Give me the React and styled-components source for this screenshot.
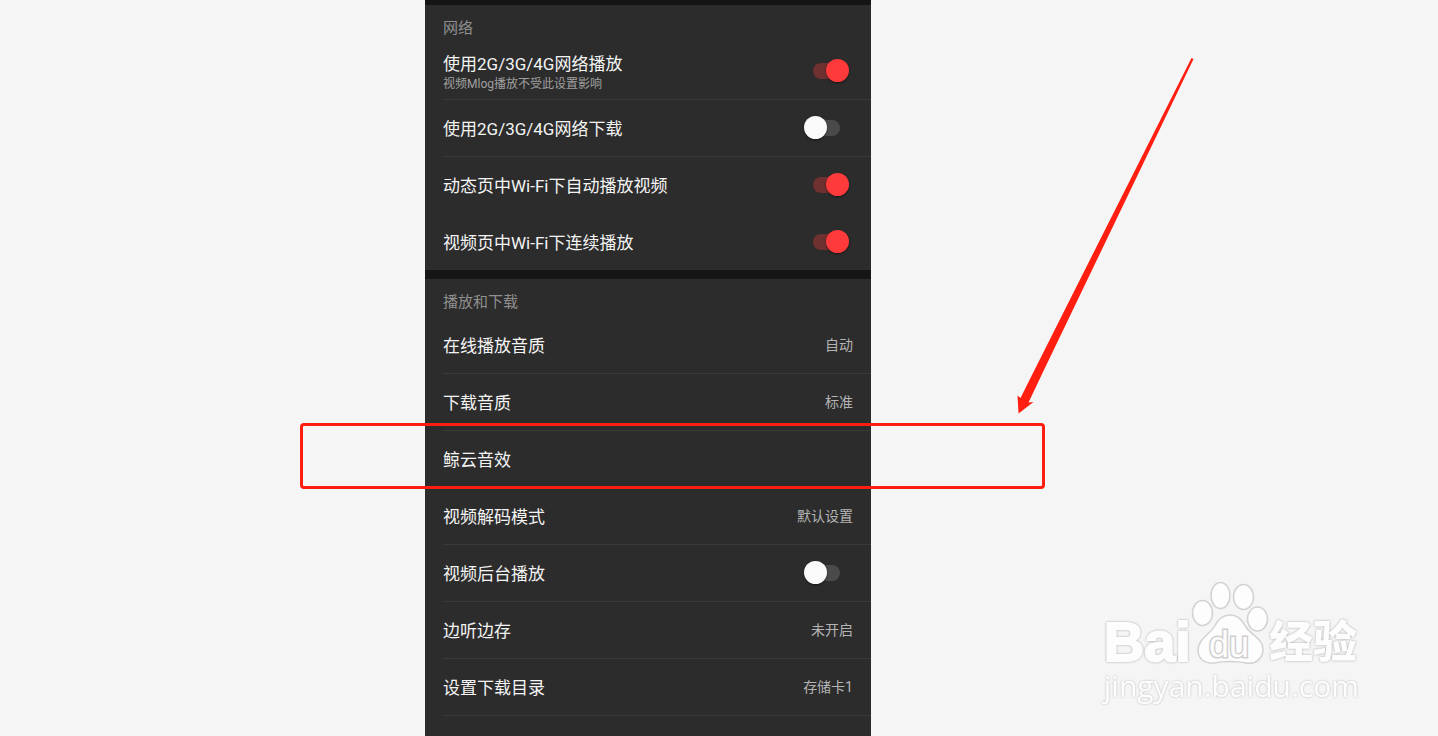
import React, { useState } from 'react'
import styled, { createGlobalStyle } from 'styled-components';

const sections = [
  {
    title: '网络',
    rows: [
      { id: 'mobile-play', label: '使用2G/3G/4G网络播放', hint: '视频Mlog播放不受此设置影响', on: true },
      { id: 'mobile-download', label: '使用2G/3G/4G网络下载', on: false },
      { id: 'wifi-autoplay', label: '动态页中Wi-Fi下自动播放视频', on: true },
      { id: 'wifi-continuous', label: '视频页中Wi-Fi下连续播放', on: true, plain: true },
    ],
  },
  {
    title: '播放和下载',
    rows: [
      { id: 'online-quality', label: '在线播放音质', value: '自动' },
      { id: 'download-quality', label: '下载音质', value: '标准' },
      { id: 'sound-effect', label: '鲸云音效', value: '', marked: true },
      { id: 'decode-mode', label: '视频解码模式', value: '默认设置' },
      { id: 'background-play', label: '视频后台播放', on: false },
      { id: 'cache', label: '边听边存', value: '未开启' },
      { id: 'download-folder', label: '设置下载目录', value: '存储卡1' },
    ],
  },
];

const SwitchRow = ({ row }) => {
  const [on, setOn] = useState(row.on);

  return (
    <Row as="label" htmlFor={row.id} $plain={row.plain}>
      <Texts>
        <Label>{row.label}</Label>
        {row.hint && <Hint>{row.hint}</Hint>}
      </Texts>
      <Switch id={row.id} type="checkbox" role="switch" checked={on} onChange={e => setOn(e.target.checked)} />
    </Row>
  )
}

const LinkRow = ({ row }) => (
  <Row as="button" type="button">
    <Texts>
      <Label>{row.label}</Label>
    </Texts>
    <Value>{row.value}</Value>
    {
      row.marked &&
      <Marker>
        <Arrow viewBox="0 0 180 360" aria-hidden="true">
          <path d="M175.5 2 L17.5 316 L4.5 342 L1.5 339.5 L2.5 357.5 L17.5 346 L12.5 346.5 L27 316 L177.5 3 Z" />
        </Arrow>
      </Marker>
    }
  </Row>
)

const Watermark = () => (
  <Brand>
    <BrandTop>
      <BrandWord>Bai</BrandWord>
      <Paw>
        <svg viewBox="0 0 80 88" aria-hidden="true">
          <ellipse cx="13.5" cy="33" rx="10" ry="12.5" />
          <ellipse cx="31.5" cy="15.5" rx="9.5" ry="13" />
          <ellipse cx="54.5" cy="17" rx="10" ry="12.5" />
          <ellipse cx="68.5" cy="39" rx="10" ry="12" />
          <path d="M41 35 C33 35 28 41 25 47 C21 54 9 59 9 70 C9 79 16 84 25 83 C34 81 48 81 57 83 C67 85 74 78 74 69 C74 59 62 55 57 47 C53 40 49 35 41 35 Z" />
        </svg>
        <PawText>du</PawText>
      </Paw>
      <BrandName>经验</BrandName>
    </BrandTop>
    <BrandUrl>jingyan.baidu.com</BrandUrl>
  </Brand>
)

const App = () => (
  <>
    <GlobalStyle />
    <Page>
      <Panel>
        {sections.map(section => (
          <Section key={section.title}>
            <Title>{section.title}</Title>
            {section.rows.map(row => (
              row.on === undefined
                ? <LinkRow key={row.id} row={row} />
                : <SwitchRow key={row.id} row={row} />
            ))}
          </Section>
        ))}
        <PanelEnd />
      </Panel>
      <Watermark />
    </Page>
  </>
)

export default App;

const GlobalStyle = createGlobalStyle`
  * {
    box-sizing: border-box;
  }
  body {
    margin: 0;
    background: #f5f5f5;
    font-family: Roboto, 'Noto Sans CJK SC', sans-serif;
  }
`;

const Page = styled.div`
  position: relative;
  display: grid;
  grid-template-columns: 425fr minmax(0, 446px) 567fr;
  height: 100vh;
  overflow: hidden;
`;

const Panel = styled.main`
  grid-column: 2;
  display: flex;
  flex-direction: column;
  background: #2c2c2c;
`;

const Section = styled.section`
  border-top: 9px solid #151515;

  &:first-child {
    border-top-width: 5px;
  }
`;

const Title = styled.h2`
  margin: 0;
  height: 37px;
  padding: 12px 18px 0;
  font-size: 15px;
  font-weight: 400;
  line-height: 22px;
  color: #8f8f8f;
`;

const Row = styled.div`
  position: relative;
  display: flex;
  align-items: center;
  justify-content: space-between;
  width: calc(100% - 18px);
  height: 57px;
  margin: 0 0 0 18px;
  padding: 0 18px 0 0;
  border: 0;
  border-top: 1px solid ${props => props.$plain ? 'transparent' : '#3a3a3a'};
  background: none;
  font-family: inherit;
  text-align: left;

  h2 + & {
    border-top-color: transparent;
  }
`;

const Texts = styled.span`
  display: flex;
  flex-direction: column;
  padding-top: 2px;
`;

const Label = styled.span`
  font-size: 17px;
  line-height: 24px;
  color: #f4f4f4;
`;

const Hint = styled.span`
  font-size: 12px;
  line-height: 16px;
  color: #a0a0a0;
`;

const Value = styled.span`
  font-size: 14px;
  line-height: 20px;
  color: #b4b4b4;
`;

const Switch = styled.input`
  appearance: none;
  position: relative;
  flex: none;
  width: 27px;
  height: 16px;
  margin: 0 13px 0 0;
  border-radius: 8px;
  background: ${props => props.checked ? '#6f3030' : '#4a4a4a'};

  &::before {
    content: '';
    position: absolute;
    top: -4px;
    left: ${props => props.checked ? '13px' : '-9px'};
    width: 23px;
    height: 23px;
    border-radius: 50%;
    background: ${props => props.checked ? '#ff3a3a' : '#fafafa'};
    box-shadow: 0 1px 2px rgba(0, 0, 0, 0.5);
  }
`;

const PanelEnd = styled.div`
  flex: 1;
  margin-left: 18px;
  border-top: 1px solid #3a3a3a;
`;

const Marker = styled.span`
  position: absolute;
  z-index: 1;
  top: -8px;
  left: -143px;
  right: -174px;
  height: 66px;
  border: 3px solid #ff1e10;
  border-radius: 4px;
`;

const Arrow = styled.svg`
  position: absolute;
  right: -154px;
  bottom: 70px;
  width: 180px;
  height: 360px;
  fill: #ff1e10;
`;

const Brand = styled.div`
  position: absolute;
  right: 79px;
  bottom: 32px;
  color: #fdfdfd;
`;

const BrandTop = styled.div`
  display: flex;
  align-items: flex-end;
  height: 88px;
`;

const BrandWord = styled.span`
  -webkit-text-stroke: 2px #fdfdfd;
  filter: drop-shadow(0 0 1px #aaa);
  font-family: 'Liberation Sans', sans-serif;
  font-size: 56px;
  font-weight: 700;
  line-height: 52px;
`;

const Paw = styled.span`
  position: relative;
  width: 80px;
  height: 88px;
  margin: 0 0 0 -2px;

  svg {
    display: block;
    fill: #fdfdfd;
    stroke: #d2d2d2;
    stroke-width: 1.5;
  }
`;

const PawText = styled.span`
  position: absolute;
  left: 20px;
  bottom: 5px;
  paint-order: stroke fill;
  -webkit-text-stroke: 3px #cfcfcf;
  font-family: 'Liberation Sans', sans-serif;
  font-size: 36px;
  line-height: 36px;
`;

const BrandName = styled.span`
  filter: drop-shadow(0 0 1px #aaa);
  font-family: 'Noto Sans CJK SC', sans-serif;
  font-size: 44px;
  font-weight: 900;
  line-height: 58px;
`;

const BrandUrl = styled.div`
  filter: drop-shadow(0 0 1px #bbb);
  font-family: 'Open Sans', sans-serif;
  font-size: 30px;
  line-height: 36px;
`;
